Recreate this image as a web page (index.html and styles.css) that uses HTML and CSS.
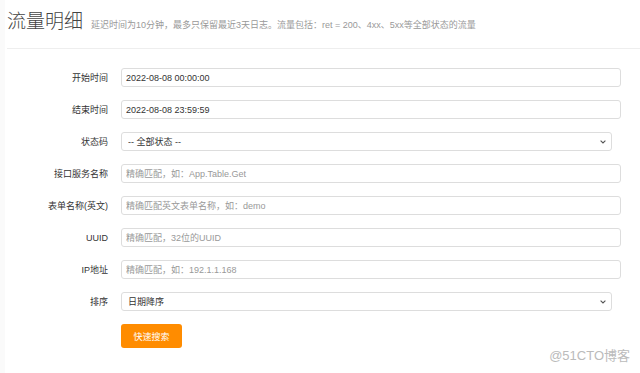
FILE: index.html
```html
<!DOCTYPE html><html>
<head>
  <meta charset="utf-8">
  <meta name="viewport" content="width=device-width, initial-scale=1.0">
  <title>流量明细</title>
  <link rel="stylesheet" href="styles.css">
</head><body>

<div class="page">
  <div class="header">
    <h1>流量明细</h1>
    <small>延迟时间为10分钟，最多只保留最近3天日志。流量包括：ret = 200、4xx、5xx等全部状态的流量</small>
  </div>

  <form class="search">
    <p><label for="start">开始时间</label><input id="start" name="start" type="text" value="2022-08-08 00:00:00"></p>
    <p><label for="end">结束时间</label><input id="end" name="end" type="text" value="2022-08-08 23:59:59"></p>
    <p>
      <label for="status">状态码</label>
      <select id="status" name="status">
        <option value="" selected>-- 全部状态 --</option>
        <option value="200">200</option>
        <option value="4xx">4xx</option>
        <option value="5xx">5xx</option>
      </select>
    </p>
    <p><label for="service">接口服务名称</label><input id="service" name="service" type="text" placeholder="精确匹配，如：App.Table.Get"></p>
    <p><label for="table">表单名称(英文)</label><input id="table" name="table" type="text" placeholder="精确匹配英文表单名称，如：demo"></p>
    <p><label for="uuid">UUID</label><input id="uuid" name="uuid" type="text" placeholder="精确匹配，32位的UUID"></p>
    <p><label for="ip">IP地址</label><input id="ip" name="ip" type="text" placeholder="精确匹配，如：192.1.1.168"></p>
    <p>
      <label for="order">排序</label>
      <select id="order" name="order">
        <option value="desc" selected>日期降序</option>
        <option value="asc">日期升序</option>
      </select>
    </p>
    <p><label></label><button type="submit">快速搜索</button></p>
  </form>
</div>

<div class="watermark">@51CTO博客</div>

</body></html>
```

FILE: styles.css
```css
* { box-sizing: border-box; }
html, body { margin: 0; padding: 0; }
body {
  font-family: "Liberation Sans", "Noto Sans CJK SC", sans-serif;
  font-size: 9px;
  color: #333;
  background: #fff;
  border-left: 5px solid #fafafa;
  min-height: 373px;
}
.page { padding: 0 0 0 2px; }
.header {
  display: flex;
  align-items: baseline;
  gap: 8px;
  height: 49px;
  padding-top: 10px;
  border-bottom: 1px solid #eee;
}
h1 { margin: 0; font-size: 19px; font-weight: 300; line-height: 24px; color: #444; }
.header small { font-size: 9px; color: #999; }

.search { padding-top: 19px; }
.search p { display: flex; align-items: center; margin: 0 0 13px 0; height: 19px; }
.search label { width: 101px; text-align: right; margin-right: 13px; color: #333; flex: none; }
.search input, .search select {
  height: 19px;
  width: 500px;
  padding: 0 4px;
  border: 1px solid #ddd;
  border-radius: 3px;
  font-family: inherit;
  font-size: 9px;
  color: #333;
  background: #fff;
  outline: none;
}
.search input::placeholder { color: #999; }
.search select {
  width: 491px;
  appearance: none;
  -webkit-appearance: none;
  padding-left: 6px;
  background: #fff url("data:image/svg+xml;utf8,<svg xmlns='http://www.w3.org/2000/svg' width='6' height='4' viewBox='0 0 6 4'><path d='M0.6 0.6 L3 3 L5.4 0.6' fill='none' stroke='%23555' stroke-width='1.1'/></svg>") no-repeat right 5px center;
}
.search button {
  height: 24px;
  width: 61px;
  margin-top: 5px;
  border: 0;
  border-radius: 3px;
  background: #ff8c00;
  color: #fff;
  font-family: inherit;
  font-size: 9px;
}

.watermark {
  position: absolute;
  right: 10px;
  bottom: 9px;
  font-size: 13px;
  color: #bbb;
}
```
